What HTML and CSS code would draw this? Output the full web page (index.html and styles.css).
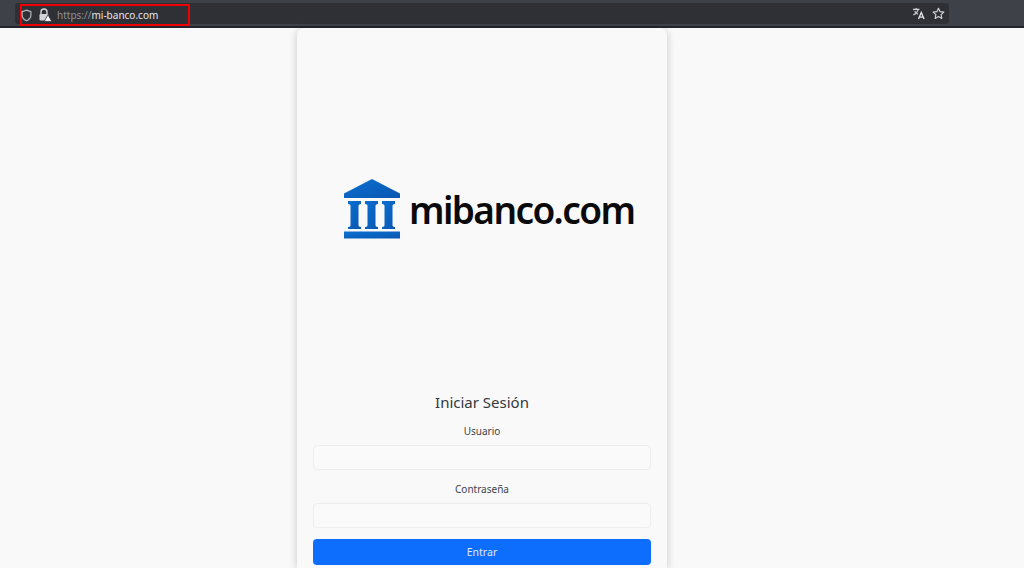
FILE: index.html
```html
<!DOCTYPE html>
<html lang="es">
<head>
  <meta charset="UTF-8">
  <title>Iniciar Sesión</title>
  <link rel="stylesheet" href="styles.css">
</head>
<body>
  <header class="toolbar">
    <div class="urlbar">
      <div class="url-mark">
        <svg class="icon-shield" width="11" height="13" viewBox="0 0 12 14">
          <path d="M6 1.2 L10.8 2.8 V6.5 C10.8 9.6 8.8 11.6 6 12.8 C3.2 11.6 1.2 9.6 1.2 6.5 V2.8 Z" fill="none" stroke="#b9babd" stroke-width="1.3"/>
        </svg>
        <svg class="icon-lock" width="14" height="14" viewBox="0 0 14 14">
          <path d="M3 6 V4 a3 3 0 0 1 6 0 V6" fill="none" stroke="#d4d5d8" stroke-width="1.4"/>
          <rect x="1.5" y="6" width="9" height="6.5" rx="1.2" fill="#d4d5d8"/>
          <path d="M10 6.8 L13.8 13.4 H6.2 Z" fill="#fff" stroke="#2f3036" stroke-width="0.8"/>
        </svg>
        <span class="url"><span class="url-scheme">https://</span>mi-banco.com</span>
      </div>
      <div class="url-actions">
        <svg width="13" height="13" viewBox="0 0 14 14">
          <path d="M1 2.5 H8 M4.5 1 V2.5 M6.6 2.5 C6 5.2 4 7.4 1.4 8.6 M2.8 4.4 C3.6 6 5 7.2 6.4 7.8" fill="none" stroke="#d4d5d8" stroke-width="1.2"/>
          <path d="M7 13 L10 5.8 L13 13 M8 11 H12" fill="none" stroke="#e4e5e7" stroke-width="1.4"/>
        </svg>
        <svg width="13" height="13" viewBox="0 0 14 14">
          <path d="M7 1.3 L8.7 5 L12.8 5.5 L9.8 8.2 L10.6 12.3 L7 10.3 L3.4 12.3 L4.2 8.2 L1.2 5.5 L5.3 5 Z" fill="none" stroke="#d4d5d8" stroke-width="1.2" stroke-linejoin="round"/>
        </svg>
      </div>
    </div>
  </header>

  <main class="page">
    <section class="card">
      <div class="logo">
        <svg class="logo-mark" width="58" height="60" viewBox="0 0 58 60">
          <defs>
            <linearGradient id="bank" x1="0" y1="0" x2="1" y2="1">
              <stop offset="0" stop-color="#0a70d2"/>
              <stop offset="1" stop-color="#0a56b0"/>
            </linearGradient>
          </defs>
          <path d="M29 0 L57 14.5 V19 H1 V14.5 Z" fill="url(#bank)"/>
          <path d="M5 22 H18 V25 C16 25 15.5 26 15.5 27 V46 C15.5 47 16 48 18 48 V50 H5 V48 C7 48 7.5 47 7.5 46 V27 C7.5 26 7 25 5 25 Z" fill="url(#bank)"/>
          <path d="M22 22 H35 V25 C33 25 32.5 26 32.5 27 V46 C32.5 47 33 48 35 48 V50 H22 V48 C24 48 24.5 47 24.5 46 V27 C24.5 26 24 25 22 25 Z" fill="url(#bank)"/>
          <path d="M39 22 H52 V25 C50 25 49.5 26 49.5 27 V46 C49.5 47 50 48 52 48 V50 H39 V48 C41 48 41.5 47 41.5 46 V27 C41.5 26 41 25 39 25 Z" fill="url(#bank)"/>
          <rect x="1" y="52.5" width="56" height="7" fill="url(#bank)"/>
        </svg>
        <span class="logo-text">mibanco.com</span>
      </div>

      <h1 class="title">Iniciar Sesión</h1>
      <form class="login-form">
        <label class="field">
          Usuario
          <input type="text">
        </label>
        <label class="field">
          Contraseña
          <input type="password">
        </label>
        <button type="button" class="btn-primary">Entrar</button>
      </form>
    </section>
  </main>
</body>
</html>
```

FILE: styles.css
```css
/* Base */
html, body {
  margin: 0;
  padding: 0;
  height: 568px;
  overflow: hidden;
}
body {
  font-family: "Noto Sans", "Open Sans", sans-serif;
  background-color: #f9f9f9;
  color: #212529;
}

/* Barra del navegador */
.toolbar {
  box-sizing: border-box;
  height: 28px;
  padding: 3px 75px 0 15px;
  background-color: #3f4149;
  border-bottom: 2px solid #24252a;
}
.urlbar {
  display: flex;
  align-items: flex-start;
  justify-content: space-between;
  height: 21px;
  background-color: #2f3036;
  border-radius: 3px;
}
.url-mark {
  box-sizing: border-box;
  display: flex;
  align-items: center;
  width: 170px;
  height: 22px;
  margin: 1px 0 0 5px;
  border: 2px solid #f00000;
}
.icon-shield {
  margin-left: -1px;
}
.icon-lock {
  margin-left: 6px;
}
.url {
  margin-left: 5px;
  font-size: 10px;
  color: #e6e6e8;
  white-space: nowrap;
}
.url-scheme {
  color: #8f9095;
}
.url-actions {
  display: flex;
  align-items: center;
  gap: 7px;
  height: 21px;
  padding-right: 4px;
}

/* Tarjeta */
.page {
  display: flex;
  justify-content: center;
  padding-right: 60px;
}
.card {
  box-sizing: border-box;
  width: 370px;
  height: 540px;
  padding: 0 16px;
  background-color: #f9f9f9;
  border-radius: 7px 7px 0 0;
  box-shadow: 0 1px 8px rgba(0, 0, 0, 0.2);
}
.logo {
  display: flex;
  align-items: center;
  gap: 8px;
  height: 362px;
  padding-left: 30px;
}
.logo-text {
  font-size: 37px;
  font-weight: 600;
  letter-spacing: -1.6px;
  color: #0a0a0c;
}
.title {
  margin: 0 0 8px;
  font-size: 15px;
  line-height: 24px;
  font-weight: 400;
  text-align: center;
  color: #33383d;
}
.login-form {
  display: flex;
  flex-direction: column;
}
.field {
  display: block;
  margin-bottom: 10px;
  padding-top: 1px;
  font-size: 10px;
  line-height: 17px;
  text-align: center;
  color: #3f444a;
}
.field input {
  display: block;
  box-sizing: border-box;
  width: 100%;
  height: 25px;
  margin-top: 5px;
  border: 1px solid #eceef0;
  border-radius: 4px;
  background-color: #fafafa;
}
.btn-primary {
  height: 26px;
  margin-top: 1px;
  border: none;
  border-radius: 4px;
  background-color: #0d6efd;
  color: #dfeaff;
  font-family: inherit;
  font-size: 10.5px;
  cursor: pointer;
}
```
